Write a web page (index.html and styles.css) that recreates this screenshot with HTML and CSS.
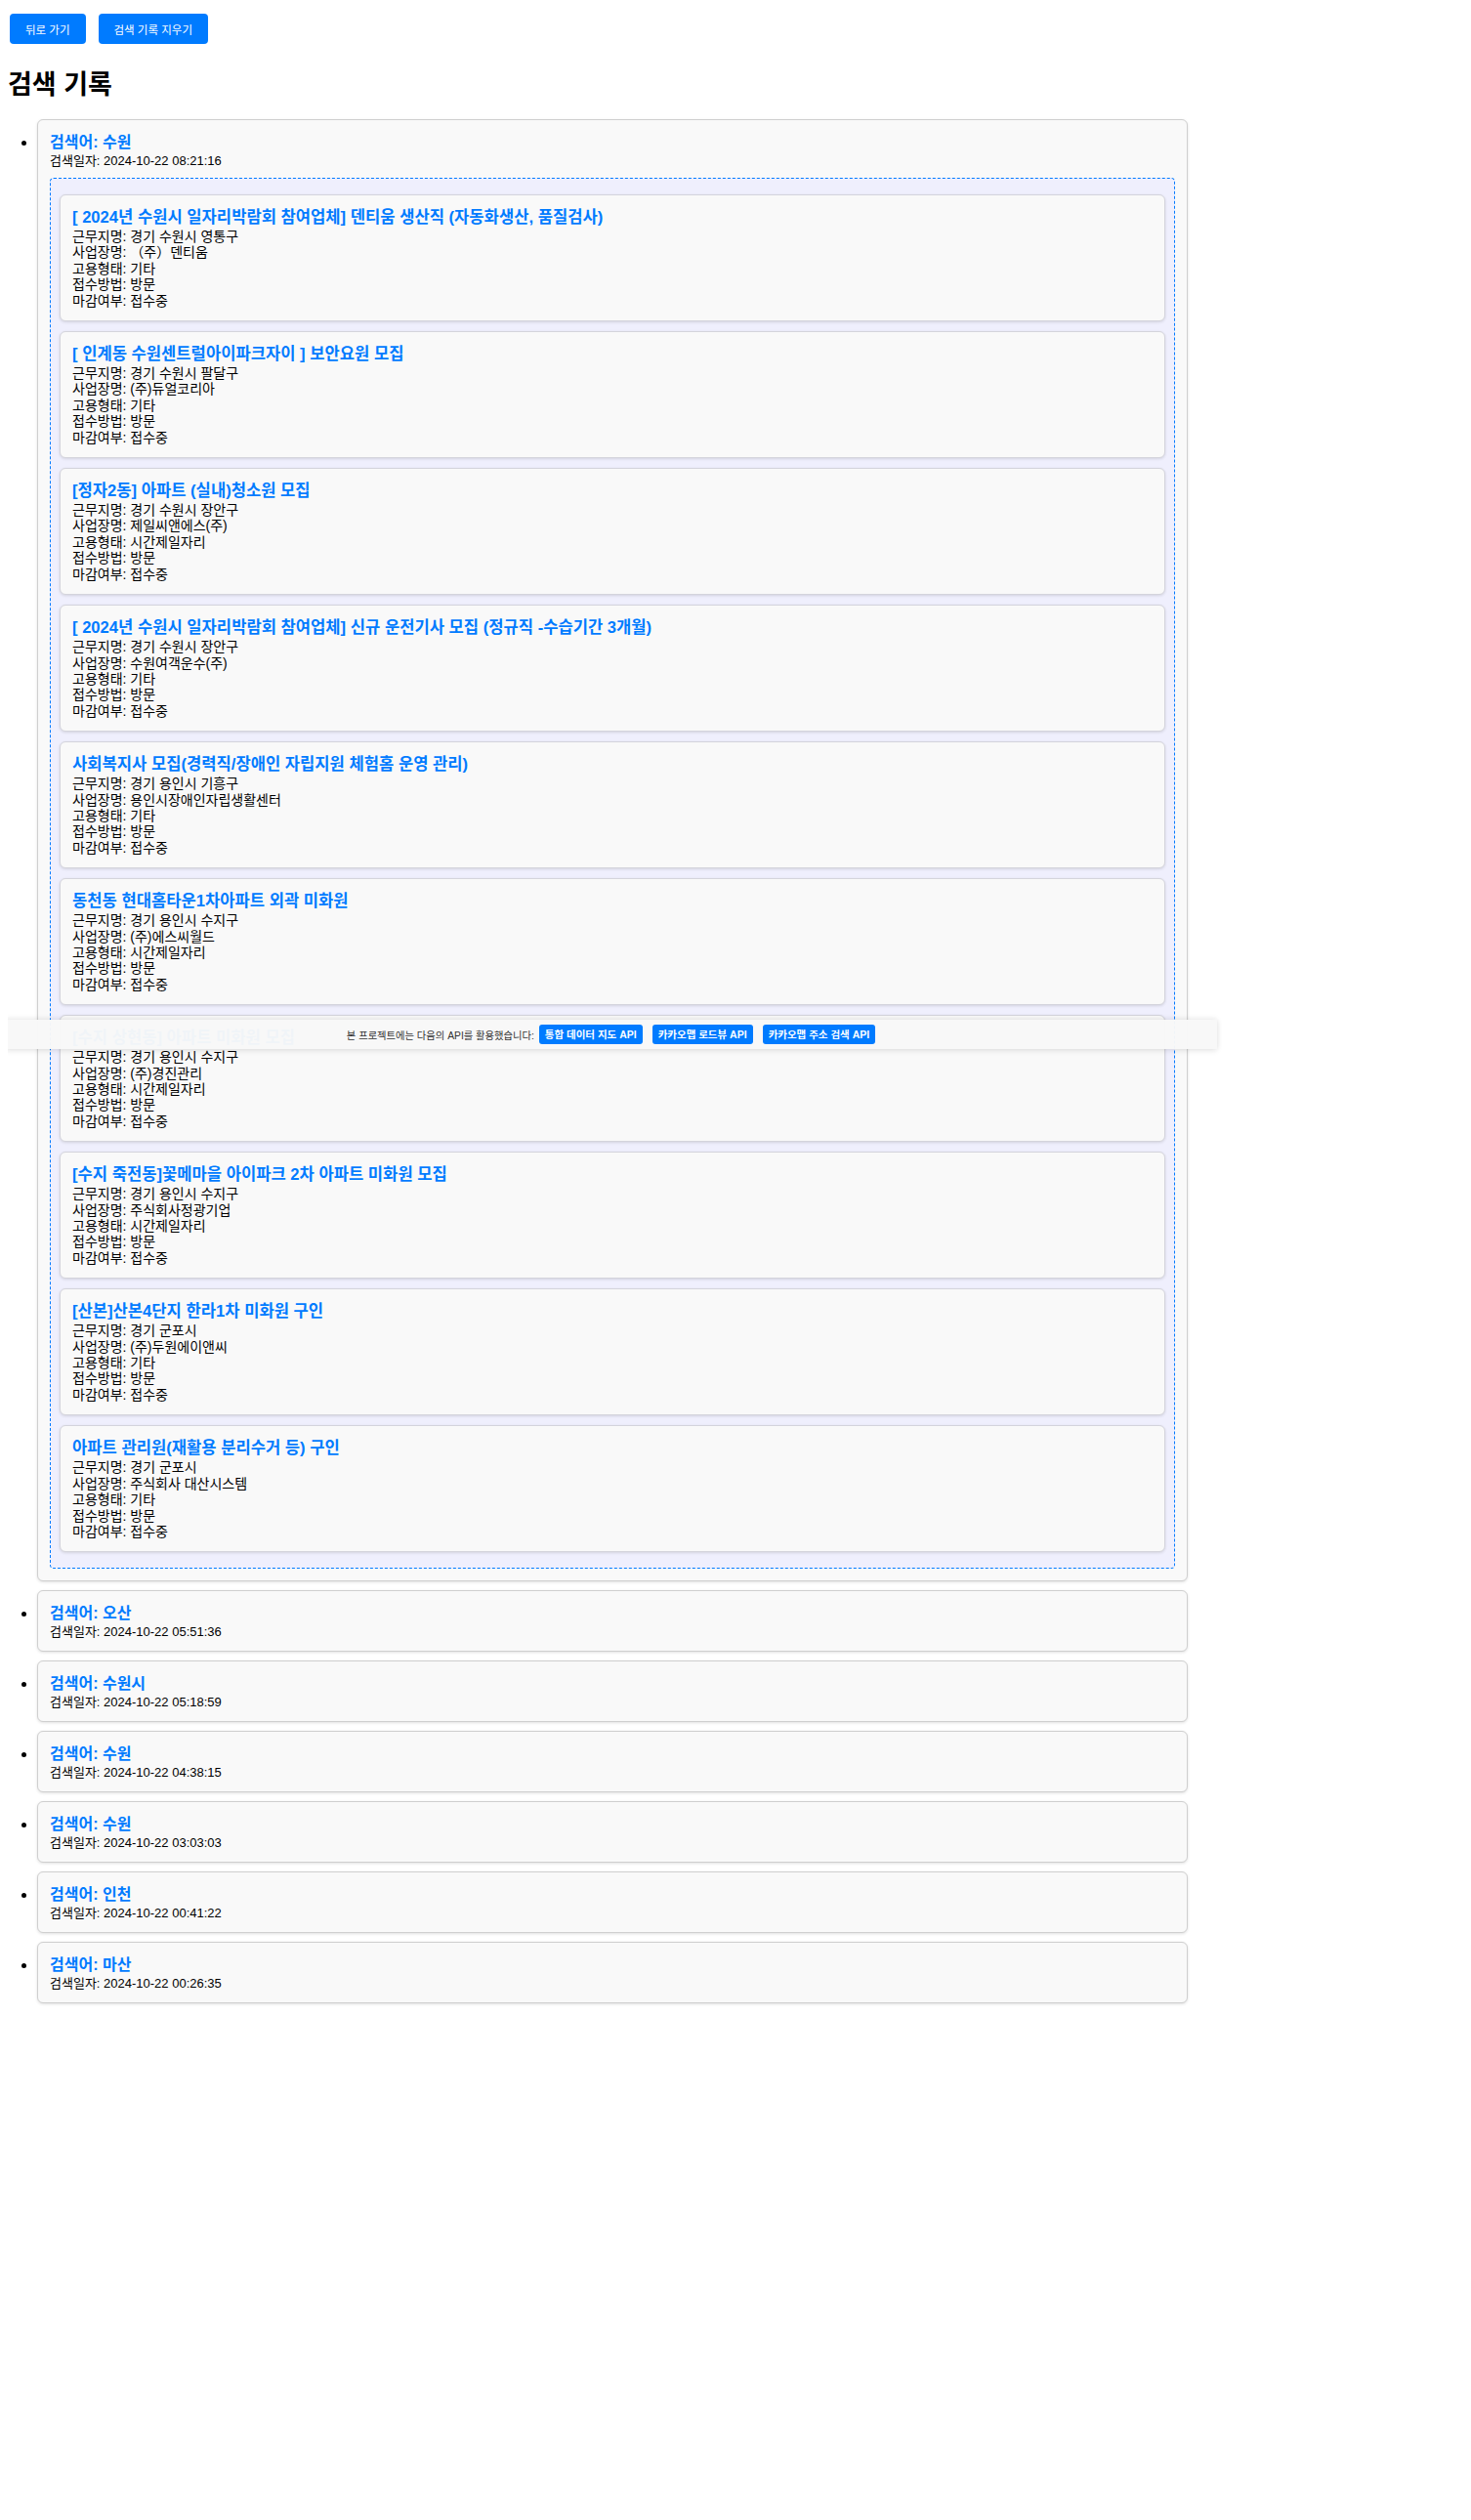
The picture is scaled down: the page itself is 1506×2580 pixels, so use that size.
FILE: index.html
```html
<!DOCTYPE html>
<html lang="ko">
<head>
<meta charset="utf-8">
<title>검색 기록</title>
<link rel="stylesheet" href="styles.css">
</head>
<body>
<div class="toolbar">
  <button class="btn">뒤로 가기</button>
  <button class="btn">검색 기록 지우기</button>
</div>
<h1 class="page-title">검색 기록</h1>
<ul class="history">
  <li class="entry">
    <div class="entry-title">검색어: 수원</div>
    <div class="entry-date">검색일자: 2024-10-22 08:21:16</div>
    <ul class="results">
      <li class="job">
        <div class="job-title">[ 2024년 수원시 일자리박람회 참여업체] 덴티움 생산직 (자동화생산, 품질검사)</div>
        <div class="job-line">근무지명: 경기 수원시 영통구</div>
        <div class="job-line">사업장명: （주）덴티움</div>
        <div class="job-line">고용형태: 기타</div>
        <div class="job-line">접수방법: 방문</div>
        <div class="job-line">마감여부: 접수중</div>
      </li>
      <li class="job">
        <div class="job-title">[ 인계동 수원센트럴아이파크자이 ] 보안요원 모집</div>
        <div class="job-line">근무지명: 경기 수원시 팔달구</div>
        <div class="job-line">사업장명: (주)듀얼코리아</div>
        <div class="job-line">고용형태: 기타</div>
        <div class="job-line">접수방법: 방문</div>
        <div class="job-line">마감여부: 접수중</div>
      </li>
      <li class="job">
        <div class="job-title">[정자2동] 아파트 (실내)청소원 모집</div>
        <div class="job-line">근무지명: 경기 수원시 장안구</div>
        <div class="job-line">사업장명: 제일씨앤에스(주)</div>
        <div class="job-line">고용형태: 시간제일자리</div>
        <div class="job-line">접수방법: 방문</div>
        <div class="job-line">마감여부: 접수중</div>
      </li>
      <li class="job">
        <div class="job-title">[ 2024년 수원시 일자리박람회 참여업체] 신규 운전기사 모집 (정규직 -수습기간 3개월)</div>
        <div class="job-line">근무지명: 경기 수원시 장안구</div>
        <div class="job-line">사업장명: 수원여객운수(주)</div>
        <div class="job-line">고용형태: 기타</div>
        <div class="job-line">접수방법: 방문</div>
        <div class="job-line">마감여부: 접수중</div>
      </li>
      <li class="job">
        <div class="job-title">사회복지사 모집(경력직/장애인 자립지원 체험홈 운영 관리)</div>
        <div class="job-line">근무지명: 경기 용인시 기흥구</div>
        <div class="job-line">사업장명: 용인시장애인자립생활센터</div>
        <div class="job-line">고용형태: 기타</div>
        <div class="job-line">접수방법: 방문</div>
        <div class="job-line">마감여부: 접수중</div>
      </li>
      <li class="job">
        <div class="job-title">동천동 현대홈타운1차아파트 외곽 미화원</div>
        <div class="job-line">근무지명: 경기 용인시 수지구</div>
        <div class="job-line">사업장명: (주)에스씨월드</div>
        <div class="job-line">고용형태: 시간제일자리</div>
        <div class="job-line">접수방법: 방문</div>
        <div class="job-line">마감여부: 접수중</div>
      </li>
      <li class="job">
        <div class="job-title">[수지 상현동] 아파트 미화원 모집</div>
        <div class="job-line">근무지명: 경기 용인시 수지구</div>
        <div class="job-line">사업장명: (주)경진관리</div>
        <div class="job-line">고용형태: 시간제일자리</div>
        <div class="job-line">접수방법: 방문</div>
        <div class="job-line">마감여부: 접수중</div>
      </li>
      <li class="job">
        <div class="job-title">[수지 죽전동]꽃메마을 아이파크 2차 아파트 미화원 모집</div>
        <div class="job-line">근무지명: 경기 용인시 수지구</div>
        <div class="job-line">사업장명: 주식회사정광기업</div>
        <div class="job-line">고용형태: 시간제일자리</div>
        <div class="job-line">접수방법: 방문</div>
        <div class="job-line">마감여부: 접수중</div>
      </li>
      <li class="job">
        <div class="job-title">[산본]산본4단지 한라1차 미화원 구인</div>
        <div class="job-line">근무지명: 경기 군포시</div>
        <div class="job-line">사업장명: (주)두원에이앤씨</div>
        <div class="job-line">고용형태: 기타</div>
        <div class="job-line">접수방법: 방문</div>
        <div class="job-line">마감여부: 접수중</div>
      </li>
      <li class="job">
        <div class="job-title">아파트 관리원(재활용 분리수거 등) 구인</div>
        <div class="job-line">근무지명: 경기 군포시</div>
        <div class="job-line">사업장명: 주식회사 대산시스템</div>
        <div class="job-line">고용형태: 기타</div>
        <div class="job-line">접수방법: 방문</div>
        <div class="job-line">마감여부: 접수중</div>
      </li>
    </ul>
  </li>
  <li class="entry">
    <div class="entry-title">검색어: 오산</div>
    <div class="entry-date">검색일자: 2024-10-22 05:51:36</div>
  </li>
  <li class="entry">
    <div class="entry-title">검색어: 수원시</div>
    <div class="entry-date">검색일자: 2024-10-22 05:18:59</div>
  </li>
  <li class="entry">
    <div class="entry-title">검색어: 수원</div>
    <div class="entry-date">검색일자: 2024-10-22 04:38:15</div>
  </li>
  <li class="entry">
    <div class="entry-title">검색어: 수원</div>
    <div class="entry-date">검색일자: 2024-10-22 03:03:03</div>
  </li>
  <li class="entry">
    <div class="entry-title">검색어: 인천</div>
    <div class="entry-date">검색일자: 2024-10-22 00:41:22</div>
  </li>
  <li class="entry">
    <div class="entry-title">검색어: 마산</div>
    <div class="entry-date">검색일자: 2024-10-22 00:26:35</div>
  </li>
</ul>
<footer class="api-bar">
  <span class="api-text">본 프로젝트에는 다음의 API를 활용했습니다:</span>
  <span class="api-btn">통합 데이터 지도 API</span>
  <span class="api-btn">카카오맵 로드뷰 API</span>
  <span class="api-btn">카카오맵 주소 검색 API</span>
</footer>
</body>
</html>
```

FILE: styles.css
```css
html, body {
  background: #ffffff;
}
body {
  margin: 8px;
  font-family: "Liberation Sans", "Noto Sans CJK KR", sans-serif;
  color: #000;
  position: relative;
  min-height: 2560px;
}
.toolbar {
  display: flex;
  gap: 13px;
  padding: 6px 2px 0;
}
.btn {
  background: #007bff;
  color: #fff;
  border: none;
  border-radius: 4px;
  font-family: "Liberation Sans", "Noto Sans CJK KR", sans-serif;
  font-size: 11.5px;
  height: 31px;
  padding: 0 16px;
  cursor: pointer;
}
.page-title {
  font-size: 27px;
  font-weight: bold;
  line-height: 36px;
  margin: 24px 0 17px;
}
.history {
  margin: 0;
  padding: 0 0 0 30px;
}
.entry {
  max-width: 1178px;
  box-sizing: border-box;
  background: #f9f9f9;
  border: 1px solid #cfcfcf;
  border-radius: 6px;
  box-shadow: 0 1px 3px rgba(0, 0, 0, 0.12);
  padding: 12px;
  margin-bottom: 9px;
  font-size: 16px;
}
.entry-title {
  color: #007bff;
  font-weight: bold;
  font-size: 16px;
  line-height: 22px;
}
.entry-date {
  font-size: 13px;
  line-height: 15px;
}
.results {
  list-style: none;
  margin: 10px 0 0;
  padding: 16px 9px;
  background: #efeffd;
  border: 1px dashed #007bff;
  border-radius: 4px;
}
.job {
  background: #f9f9f9;
  border: 1px solid #d4d4dc;
  border-radius: 6px;
  box-shadow: 0 1px 3px rgba(0, 0, 0, 0.12);
  padding: 12px;
  margin-bottom: 10px;
}
.job:last-child {
  margin-bottom: 0;
}
.job-title {
  color: #007bff;
  font-weight: bold;
  font-size: 16.6px;
  line-height: 22px;
}
.job-line {
  font-size: 14px;
  line-height: 16.4px;
}
.api-bar {
  position: absolute;
  left: -3px;
  top: 1036px;
  width: 1241px;
  height: 30px;
  box-sizing: border-box;
  display: flex;
  align-items: center;
  justify-content: center;
  gap: 10px;
  background: rgba(248, 248, 248, 0.97);
  box-shadow: 0 -1px 6px rgba(0, 0, 0, 0.08), 0 2px 6px rgba(0, 0, 0, 0.08);
}
.api-text {
  font-size: 10.3px;
  color: #333;
  margin-right: -5px;
}
.api-btn {
  background: #007bff;
  color: #fff;
  font-size: 10.5px;
  font-weight: bold;
  line-height: 12px;
  padding: 4px 6px;
  border-radius: 3px;
}
```
